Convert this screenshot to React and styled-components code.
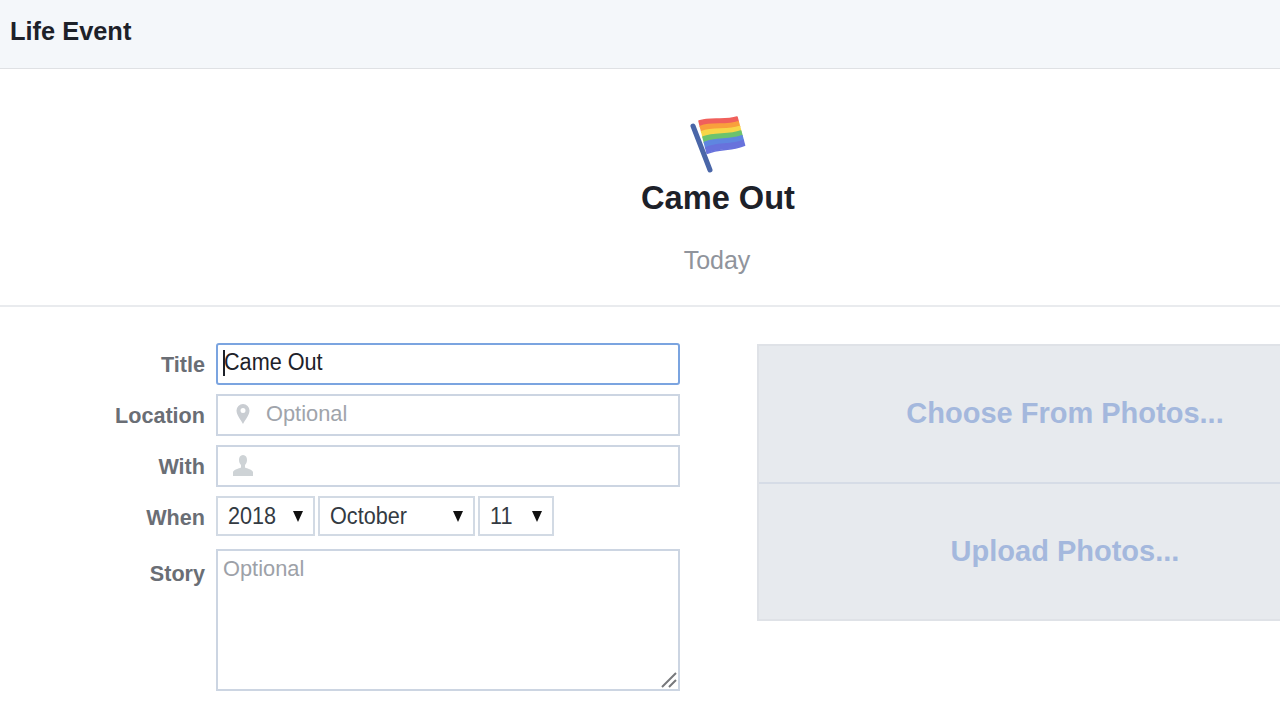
import React from "react";
import styled, { createGlobalStyle } from "styled-components";

const Global = createGlobalStyle`
  html, body { margin: 0; padding: 0; background: #fff; overflow: hidden; }
  body { font-family: "Liberation Sans", Arial, sans-serif; }
`;

const Page = styled.div`
  width: 1434px;
  height: 720px;
  overflow: hidden;
  background: #fff;
`;

const Header = styled.header`
  height: 68px;
  background: #f4f7fa;
  border-bottom: 1px solid #dfe1e4;
  padding-left: 10px;
  display: flex;
  align-items: center;
`;

const HeaderTitle = styled.h1`
  margin: 0 0 6px;
  font-size: 25.4px;
  font-weight: 700;
  color: #1d2129;
`;

const Hero = styled.section`
  height: 238px;
  border-bottom: 2px solid #e9ebee;
  display: flex;
  flex-direction: column;
  align-items: center;
  padding-top: 45px;
  box-sizing: border-box;
`;

const FlagArt = styled.svg`
  display: block;
  width: 60px;
  height: 60px;
  margin-left: 4px;
`;

const EventName = styled.div`
  margin: 5px 0 0 2px;
  font-size: 32.6px;
  line-height: 38px;
  font-weight: 700;
  color: #1d2129;
`;

const EventDate = styled.div`
  margin-top: 28px;
  font-size: 25px;
  line-height: 30px;
  color: #90949c;
`;

const Body = styled.div`
  display: flex;
  padding-top: 36px;
`;

const Form = styled.div`
  width: 680px;
  display: grid;
  grid-template-columns: 205px 464px;
  column-gap: 11px;
  grid-auto-rows: min-content;
`;

const Label = styled.div`
  box-sizing: border-box;
  font-size: 21.6px;
  font-weight: 700;
  color: #6a6e75;
  text-align: right;
  line-height: 42px;
  height: ${(p) => p.$h || 42}px;
  margin-bottom: ${(p) => p.$mb ?? 9}px;
  padding-top: ${(p) => p.$pt ?? 1}px;
`;

const Field = styled.div`
  box-sizing: border-box;
  height: 42px;
  margin-bottom: 9px;
  border: 2px solid ${(p) => (p.$focus ? "#7ba4e0" : "#ccd5e2")};
  border-radius: ${(p) => (p.$focus ? 3 : 0)}px;
  display: flex;
  align-items: center;
  padding: ${(p) => (p.$focus ? "0 0 3px 5px" : "0 0 0 14px")};
  background: #fff;
`;

const FieldText = styled.span`
  font-size: 23px;
  color: #1d2129;
  transform: scaleX(0.94);
  transform-origin: left;
`;

const Caret = styled.span`
  width: 2px;
  height: 26px;
  background: #1d2129;
  margin-right: -1px;
`;

const Placeholder = styled.span`
  font-size: 22.5px;
  color: #a0a4ab;
  margin-left: 12px;
  margin-bottom: 2px;
  transform: scaleX(0.97);
  transform-origin: left;
`;

const FieldIcon = styled.svg`
  width: 22px;
  height: 24px;
  flex: none;
  margin-bottom: ${(p) => p.$mb ?? 0}px;
`;

const DateRow = styled.div`
  display: flex;
  gap: 3px;
  height: 40px;
  margin-bottom: 13px;
`;

const Select = styled.div`
  box-sizing: border-box;
  width: ${(p) => p.$w}px;
  height: 40px;
  border: 2px solid #d2dae4;
  display: flex;
  align-items: center;
  justify-content: space-between;
  padding: 0 10px;
  font-size: 23px;
  color: #333a42;
`;

const SelectValue = styled.span`
  transform: scaleX(0.94);
  transform-origin: left;
`;

const Arrow = styled.span`
  width: 0;
  height: 0;
  border-left: 5.5px solid transparent;
  border-right: 5.5px solid transparent;
  border-top: 11px solid #111;
`;

const Story = styled.div`
  position: relative;
  box-sizing: border-box;
  height: 142px;
  border: 2px solid #ccd5e2;
  padding: 5px;
  font-size: 22.5px;
  line-height: 26px;
  color: #9da1a8;
`;

const StoryText = styled.span`
  display: inline-block;
  transform: scaleX(0.97);
  transform-origin: left;
`;

const Grip = styled.svg`
  position: absolute;
  right: 0;
  bottom: 0;
  width: 18px;
  height: 18px;
`;

const PhotoPanel = styled.div`
  box-sizing: border-box;
  width: 616px;
  height: 277px;
  margin: 1px 0 0 77px;
  display: flex;
  flex-direction: column;
  background: #e7eaee;
  border: 2px solid #dfe2e7;
`;

const PhotoAction = styled.div`
  flex: 1;
  display: flex;
  align-items: center;
  justify-content: center;
  font-size: 29px;
  font-weight: 700;
  color: #a4b8dd;
  & + & {
    border-top: 2px solid #d6dce6;
  }
`;

const stripes = ["#f0605c", "#f9a03c", "#f8d648", "#6cc36e", "#5f86e0", "#6872dc"];
const TL = [10, 7];
const TR = [48, 3];
const BL = [18, 39];
const BR = [55.500, 31];
const lerp = (a, b, t) => a + (b - a) * t;
const wave = (t) => {
  const l = [lerp(TL[0], BL[0], t), lerp(TL[1], BL[1], t)];
  const r = [lerp(TR[0], BR[0], t), lerp(TR[1], BR[1], t)];
  const dx = r[0] - l[0];
  const dy = r[1] - l[1];
  return {
    l,
    r,
    c1: [l[0] + dx * 0.33, l[1] + dy * 0.33 - 3],
    c2: [l[0] + dx * 0.66, l[1] + dy * 0.66 + 3],
  };
};
const stripePath = (i) => {
  const a = wave(i / 6);
  const b = wave((i + 1.08) / 6);
  return `M${a.l} C${a.c1} ${a.c2} ${a.r} L${b.r} C${b.c2} ${b.c1} ${b.l} Z`;
};

const Flag = () => (
  <FlagArt viewBox="0 0 60 60">
    {stripes.map((c, i) => (
      <path key={c} d={stripePath(i)} fill={c} stroke={c} strokeWidth="1.500" strokeLinejoin="round" />
    ))}
    <line x1="4" y1="12" x2="21" y2="56" stroke="#4a66a8" strokeWidth="5" strokeLinecap="round" />
  </FlagArt>
);

const Pin = () => (
  <FieldIcon viewBox="0 0 22 24" $mb={3}>
    <path
      fillRule="evenodd"
      d="M11 2a6.500 6.500 0 0 0-6.500 6.500C4.500 13 9 18 11 22c2-4 6.500-9 6.500-13.500A6.500 6.500 0 0 0 11 2Zm0 4a2.500 2.500 0 1 1 0 5 2.500 2.500 0 0 1 0-5Z"
      fill="#c9cdd2"
    />
  </FieldIcon>
);

const Person = () => (
  <FieldIcon viewBox="0 0 22 24">
    <path
      d="M11 1c2.800 0 4 2.200 4 5 0 2.200-.9 4-2 5v2.500c2 1 7.500 2 8 4.500v4H1v-4c.5-2.500 6-3.500 8-4.500V11c-1.100-1-2-2.800-2-5 0-2.800 1.200-5 4-5Z"
      fill="#ced3d6"
    />
  </FieldIcon>
);

export default function App() {
  return (
    <Page>
      <Global />
      <Header>
        <HeaderTitle>Life Event</HeaderTitle>
      </Header>
      <Hero>
        <Flag />
        <EventName>Came Out</EventName>
        <EventDate>Today</EventDate>
      </Hero>
      <Body>
        <Form>
          <Label>Title</Label>
          <Field $focus>
            <Caret />
            <FieldText>Came Out</FieldText>
          </Field>
          <Label>Location</Label>
          <Field>
            <Pin />
            <Placeholder>Optional</Placeholder>
          </Field>
          <Label>With</Label>
          <Field>
            <Person />
          </Field>
          <Label $h={40} $mb={13}>When</Label>
          <DateRow>
            <Select $w={99}>
              <SelectValue>2018</SelectValue>
              <Arrow />
            </Select>
            <Select $w={157}>
              <SelectValue>October</SelectValue>
              <Arrow />
            </Select>
            <Select $w={76}>
              <SelectValue>11</SelectValue>
              <Arrow />
            </Select>
          </DateRow>
          <Label $h={142} $mb={0} $pt={4}>Story</Label>
          <Story>
            <StoryText>Optional</StoryText>
            <Grip viewBox="0 0 18 18">
              <path d="M16 2 2 16M16 9l-7 7" stroke="#77797c" strokeWidth="2" fill="none" />
            </Grip>
          </Story>
        </Form>
        <PhotoPanel>
          <PhotoAction>Choose From Photos...</PhotoAction>
          <PhotoAction>Upload Photos...</PhotoAction>
        </PhotoPanel>
      </Body>
    </Page>
  );
}
